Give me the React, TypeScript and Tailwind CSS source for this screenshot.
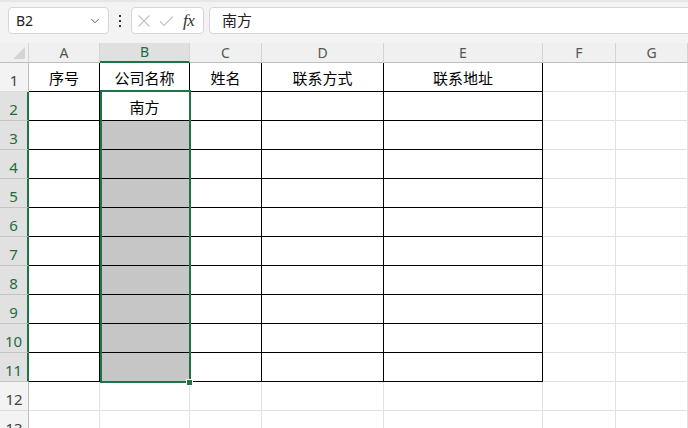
import { ChevronDown } from 'lucide-react';

const COLS = ['A', 'B', 'C', 'D', 'E', 'F', 'G'];
const ROWS = Array.from({ length: 13 }, (_, i) => i + 1);

// 表头内容
const HEAD: Record<string, string> = {
  A: '序号',
  B: '公司名称',
  C: '姓名',
  D: '联系方式',
  E: '联系地址',
};

const inTable = (c: number, r: number) => c <= 4 && r <= 11;
const selected = (c: number, r: number) => c === 1 && r >= 2 && r <= 11;

const Cell = ({ c, r }: { c: number; r: number }) => {
  const col = COLS[c];
  let text = '';
  if (r === 1) text = HEAD[col] ?? '';
  if (r === 2 && col === 'B') text = '南方';

  // 边框颜色：表格内为黑色，表格外为浅灰
  const right = inTable(c, r) ? 'border-r-black' : 'border-r-[#e1e1e1]';
  const bottom = inTable(c, r) ? 'border-b-black' : 'border-b-[#e1e1e1]';
  const fill = selected(c, r) && r > 2 ? 'bg-[#c6c6c6]' : 'bg-white';

  return (
    <div
      className={`flex items-end justify-center pb-[3px] border-r border-b ${right} ${bottom} ${fill} text-[15px] leading-[20px] text-black`}
    >
      {text}
    </div>
  );
};

const RowHeader = ({ r }: { r: number }) => {
  const sel = r >= 2 && r <= 11;
  return (
    <div
      className={`flex items-end justify-center pb-[1px] border-b text-[15px] leading-[20px] ${
        sel
          ? 'bg-[#e1e1e1] text-[#1e6b41] border-b-[#c4c4c4] border-r-2 border-r-[#217346]'
          : 'bg-[#f3f3f3] text-[#444] border-b-[#dadada] border-r border-r-[#bdbdbd]'
      }`}
    >
      {r}
    </div>
  );
};

export default function App() {
  return (
    <div
      className="w-[688px] h-[428px] overflow-hidden bg-white relative"
      style={{ fontFamily: '"Noto Sans", "Noto Sans CJK SC", sans-serif' }}
    >
      {/* 编辑栏 */}
      <div className="h-[43px] bg-[#f3f3f3] border-t-2 border-t-[#e6e6e6] flex items-start pt-[5px] pl-[8px] overflow-hidden">
        <div className="w-[101px] h-[27px] shrink-0 bg-white border border-[#d6d6d6] rounded-[4px] flex items-center pl-[7px] pr-[6px]">
          <span className="flex-1 text-[14px] text-[#222]">B2</span>
          <ChevronDown size={14} strokeWidth={1.6} color="#555" />
        </div>
        <div className="w-[22px] h-[27px] shrink-0 flex flex-col items-center justify-center gap-[3px]">
          <span className="w-[2px] h-[2px] bg-[#333]" />
          <span className="w-[2px] h-[2px] bg-[#333]" />
          <span className="w-[2px] h-[2px] bg-[#333]" />
        </div>
        <div className="w-[73px] h-[27px] shrink-0 bg-white border border-[#d6d6d6] rounded-[4px] flex items-center pl-[5px]">
          <svg width="14" height="14" viewBox="0 0 14 14" className="mr-[8px]">
            <path d="M1.5 1.5 L12.5 12.5 M12.5 1.5 L1.5 12.5" stroke="#c2c2c2" strokeWidth="1.1" fill="none" />
          </svg>
          <svg width="15" height="14" viewBox="0 0 15 14" className="mr-[9px]">
            <path d="M1 7.5 L5 11.5 L14 2.5" stroke="#c2c2c2" strokeWidth="1.1" fill="none" />
          </svg>
          <span
            className="italic text-[17px] leading-none text-[#333] tracking-[-0.5px]"
            style={{ fontFamily: '"Liberation Serif", "DejaVu Serif", serif' }}
          >
            fx
          </span>
        </div>
        <div className="w-[500px] h-[27px] shrink-0 ml-[5px] bg-white border border-[#d6d6d6] rounded-[4px] flex items-center pl-[12px] text-[15px] text-[#222]">
          南方
        </div>
      </div>

      {/* 表格区域 */}
      <div className="grid grid-cols-[29px_71px_90px_72px_122px_159px_73px_72px] grid-rows-[20px_repeat(13,29px)]">
        {/* 左上角 */}
        <div className="bg-[#f0f0f0] border-r border-b border-r-[#d4d4d4] border-b-[#bdbdbd] flex items-end justify-end pr-[3px] pb-[3px]">
          <svg width="12" height="12" viewBox="0 0 12 12">
            <path d="M12 0 L12 12 L0 12 Z" fill="#d4d4d4" />
          </svg>
        </div>
        {COLS.map((c) => (
          <div
            key={c}
            className={`flex items-center justify-center text-[14px] leading-none border-r border-r-[#d4d4d4] ${
              c === 'B'
                ? 'bg-[#e0e0e0] text-[#1e6b41] border-b-2 border-b-[#217346]'
                : 'bg-[#f0f0f0] text-[#555] border-b border-b-[#bdbdbd]'
            }`}
          >
            {c}
          </div>
        ))}
        {ROWS.map((r) => [
          <RowHeader key={`h${r}`} r={r} />,
          ...COLS.map((_, c) => <Cell key={`${r}-${c}`} c={c} r={r} />),
        ])}
      </div>

      {/* 选区边框与填充柄 */}
      <div className="absolute left-[100px] top-[90px] w-[91px] h-[293px] border-2 border-[#217346] pointer-events-none" />
      <div className="absolute left-[186px] top-[379px] w-[7px] h-[7px] bg-[#217346] border border-white" />
    </div>
  );
}
